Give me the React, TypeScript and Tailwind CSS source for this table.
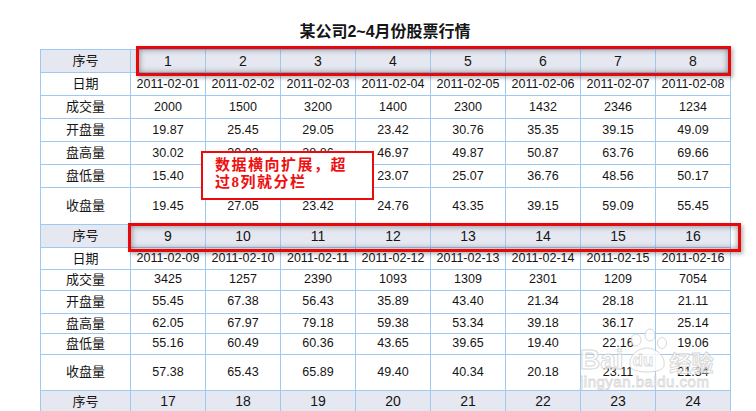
import React from 'react';

type Block = {
  ids: number[];
  rows: { label: string; values: string[]; h: string }[];
  headH: string;
};

const dates = (start: number) =>
  Array.from({ length: 8 }, (_, i) => `2011-02-${String(start + i).padStart(2, '0')}`);

const blocks: Block[] = [
  {
    ids: [1, 2, 3, 4, 5, 6, 7, 8],
    headH: 'h-[23px]',
    rows: [
      { label: '日期', values: dates(1), h: 'h-[23px]' },
      { label: '成交量', values: ['2000', '1500', '3200', '1400', '2300', '1432', '2346', '1234'], h: 'h-[23px]' },
      { label: '开盘量', values: ['19.87', '25.45', '29.05', '23.42', '30.76', '35.35', '39.15', '49.09'], h: 'h-[23px]' },
      { label: '盘高量', values: ['30.02', '30.03', '28.86', '46.97', '49.87', '50.87', '63.76', '69.66'], h: 'h-[23px]' },
      { label: '盘低量', values: ['15.40', '21.13', '20.05', '23.07', '25.07', '36.76', '48.56', '50.17'], h: 'h-[23px]' },
      { label: '收盘量', values: ['19.45', '27.05', '23.42', '24.76', '43.35', '39.15', '59.09', '55.45'], h: 'h-[37px]' },
    ],
  },
  {
    ids: [9, 10, 11, 12, 13, 14, 15, 16],
    headH: 'h-[23px]',
    rows: [
      { label: '日期', values: dates(9), h: 'h-[22px]' },
      { label: '成交量', values: ['3425', '1257', '2390', '1093', '1309', '2301', '1209', '7054'], h: 'h-[20px]' },
      { label: '开盘量', values: ['55.45', '67.38', '56.43', '35.89', '43.40', '21.34', '28.18', '21.11'], h: 'h-[23px]' },
      { label: '盘高量', values: ['62.05', '67.97', '79.18', '59.38', '53.34', '39.18', '36.17', '25.14'], h: 'h-[19px]' },
      { label: '盘低量', values: ['55.16', '60.49', '60.36', '43.65', '39.65', '19.40', '22.16', '19.06'], h: 'h-[20px]' },
      { label: '收盘量', values: ['57.38', '65.43', '65.89', '49.40', '40.34', '20.18', '23.11', '21.34'], h: 'h-[36px]' },
    ],
  },
  {
    ids: [17, 18, 19, 20, 21, 22, 23, 24],
    headH: 'h-[23px]',
    rows: [],
  },
];

const cell = 'border border-[#9ec9f3] p-0 text-center align-middle';

const App: React.FC = () => {
  return (
    <div className="relative w-[756px] h-[411px] overflow-hidden bg-white text-[#151515] font-['Liberation_Sans','Noto_Sans_CJK_SC',sans-serif]">
      {/* Title */}
      <div className="pt-[22px] h-[42px] leading-[20px] text-center text-[16px] font-bold pl-[40px] w-[730px]">
        某公司2~4月份股票行情
      </div>

      {/* Table */}
      <table className="ml-[40px] mt-[7px] w-[690px] table-fixed border-collapse">
        <colgroup>
          <col className="w-[90px]" />
          {Array.from({ length: 8 }).map((_, i) => (
            <col key={i} className="w-[75px]" />
          ))}
        </colgroup>
        <tbody>
          {blocks.map((b) => (
            <React.Fragment key={b.ids[0]}>
              <tr className={`${b.headH} bg-[#e5e8f0]`}>
                <td className={`${cell} text-[13px]`}>序号</td>
                {b.ids.map((n) => (
                  <td key={n} className={`${cell} text-[14px]`}>
                    {n}
                  </td>
                ))}
              </tr>
              {b.rows.map((r) => (
                <tr key={r.label} className={r.h}>
                  <td className={`${cell} text-[13px]`}>{r.label}</td>
                  {r.values.map((v, i) => (
                    <td key={i} className={`${cell} text-[12.5px] whitespace-nowrap`}>
                      {v}
                    </td>
                  ))}
                </tr>
              ))}
            </React.Fragment>
          ))}
        </tbody>
      </table>

      {/* Red highlight frames */}
      <div className="absolute left-[136px] top-[46px] w-[595px] h-[30px] border-[3px] border-[#e8080b] shadow-[inset_0_0_6px_rgba(0,0,0,0.45),2px_2px_4px_rgba(0,0,0,0.3)]" />
      <div className="absolute left-[128px] top-[223px] w-[613px] h-[29px] border-[3px] border-[#e8080b] shadow-[inset_0_0_6px_rgba(0,0,0,0.45),2px_2px_4px_rgba(0,0,0,0.3)]" />

      {/* Callout */}
      <div className="absolute left-[201px] top-[151px] w-[173px] h-[49px] border-2 border-[#ee0a0a] bg-white pl-[12px] pt-[4px] text-[15px] leading-[17px] font-bold tracking-[1.5px] text-[#ee1111] font-['Liberation_Serif','Noto_Sans_CJK_SC',sans-serif]">
        <div>数据横向扩展，超</div>
        <div>过8列就分栏</div>
      </div>

      {/* Watermark */}
      <div className="absolute left-[580px] top-[328px] w-[135px] h-[62px] pointer-events-none opacity-80">
        <div className="flex items-end">
          <span className="text-[28px] leading-[28px] font-bold text-white [-webkit-text-stroke:1px_#cfcfcf] font-['Liberation_Sans',sans-serif] mt-[18px]">
            Bai
          </span>
          <div className="relative w-[46px] h-[46px]">
            <svg viewBox="0 0 46 46" className="absolute inset-0 w-[46px] h-[46px]" fill="white" stroke="#cfcfcf" strokeWidth="1">
              <ellipse cx="12" cy="12" rx="5" ry="6" />
              <ellipse cx="26" cy="7" rx="5" ry="6" />
              <ellipse cx="38" cy="15" rx="4.5" ry="5.5" />
              <path d="M6 38 C4 28 14 20 23 20 C32 20 42 28 40 38 C38 46 8 46 6 38 Z" />
            </svg>
            <span className="absolute left-[9px] top-[24px] text-[17px] leading-[17px] font-bold text-white [-webkit-text-stroke:0.8px_#cfcfcf] font-['Liberation_Sans',sans-serif]">
              du
            </span>
          </div>
          <span className="text-[22px] leading-[26px] font-bold text-white [-webkit-text-stroke:1px_#cfcfcf] font-['Noto_Sans_CJK_SC',sans-serif]">
            经验
          </span>
        </div>
        <div className="text-[15px] leading-[16px] text-white [-webkit-text-stroke:0.8px_#cfcfcf] font-['Liberation_Sans',sans-serif] tracking-[0.5px]">
          jingyan.baidu.com
        </div>
      </div>
    </div>
  );
};

export default App;
